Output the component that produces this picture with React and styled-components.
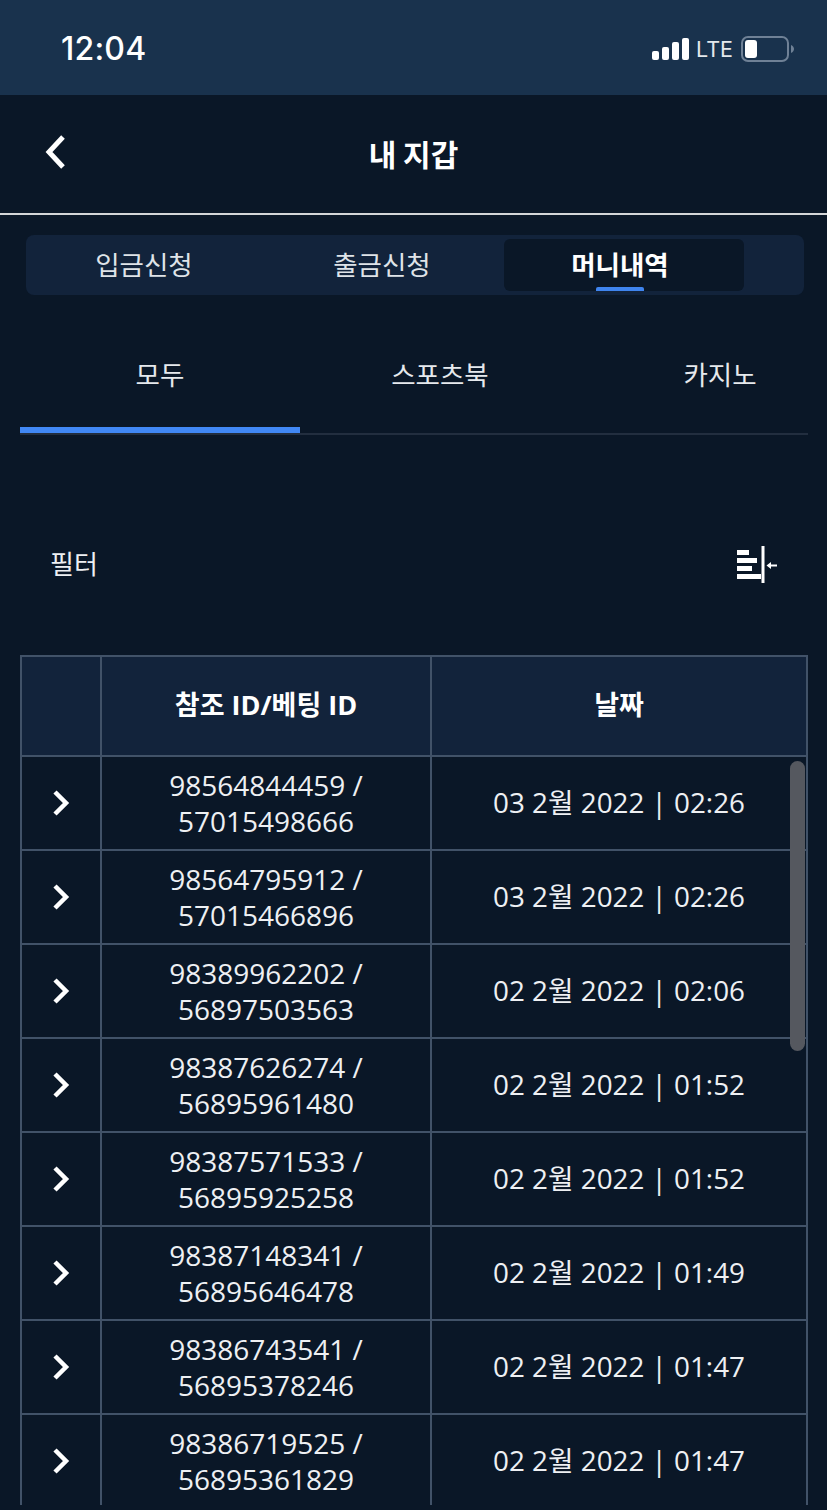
import React from "react";
import styled, { createGlobalStyle } from "styled-components";

const GlobalStyle = createGlobalStyle`
  html, body {
    margin: 0;
    padding: 0;
    background: #0a1727;
  }
`;

const Page = styled.div`
  width: 827px;
  height: 1510px;
  overflow: hidden;
  background: #0a1727;
  color: #fff;
  font-family: "Open Sans", "Noto Sans CJK KR", sans-serif;
`;

const StatusBar = styled.div`
  height: 95px;
  box-sizing: border-box;
  padding: 2px 33px 0 61px;
  display: flex;
  align-items: center;
  justify-content: space-between;
  background: #19324d;
`;

const Clock = styled.span`
  font-family: Inter, sans-serif;
  font-size: 32px;
  font-weight: 500;
  letter-spacing: 0.2px;
`;

const StatusIcons = styled.div`
  display: flex;
  align-items: center;
  gap: 7px;
`;

const Lte = styled.span`
  margin-right: 1px;
  font-family: Inter, sans-serif;
  font-size: 21.500px;
  color: #e4e8ec;
`;

const NavBar = styled.div`
  height: 120px;
  box-sizing: border-box;
  position: relative;
  display: flex;
  align-items: center;
  justify-content: center;
  border-bottom: 2px solid #d4d6d8;
`;

const BackButton = styled.div`
  position: absolute;
  left: 44px;
  top: 40px;
  line-height: 0;
`;

const Title = styled.h1`
  margin: 0 0 2px;
  font-family: "Noto Sans CJK KR", sans-serif;
  font-size: 30px;
  font-weight: 700;
`;

const MainTabs = styled.div`
  margin: 20px 23px 0 26px;
  height: 60px;
  box-sizing: border-box;
  padding: 4px 2px;
  display: flex;
  border-radius: 8px;
  background: #12233b;
`;

const MainTab = styled.div`
  position: relative;
  flex: 0 0 240px;
  margin-right: -2px;
  box-sizing: border-box;
  padding-right: 8px;
  padding-bottom: 3px;
  display: flex;
  align-items: center;
  justify-content: center;
  border-radius: 6px;
  font-family: "Noto Sans CJK KR", sans-serif;
  font-size: 26.500px;
  font-weight: ${(p) => (p.$active ? 700 : 400)};
  color: ${(p) => (p.$active ? "#fff" : "#dfe3e8")};
  background: ${(p) => (p.$active ? "#0a1727" : "transparent")};
`;

const MainTabMark = styled.span`
  position: absolute;
  left: 92px;
  bottom: 0;
  width: 48px;
  height: 4px;
  border-radius: 2px 2px 0 0;
  background: #3f84ee;
`;

const SubTabs = styled.div`
  margin: 32px 19px 0 20px;
  height: 108px;
  display: flex;
  overflow: hidden;
  box-sizing: border-box;
  border-bottom: 2px solid #222e3f;
`;

const SubTab = styled.div`
  position: relative;
  flex: 0 0 280px;
  box-sizing: border-box;
  padding-bottom: 14px;
  display: flex;
  align-items: center;
  justify-content: center;
  font-family: "Noto Sans CJK KR", sans-serif;
  font-size: 26.500px;
  color: #e6e9ed;
  box-shadow: ${(p) => (p.$active ? "inset 0 -6px 0 #4188f5" : "none")};
`;

const FilterRow = styled.div`
  margin-top: 88px;
  height: 82px;
  box-sizing: border-box;
  padding: 0 50px;
  display: flex;
  align-items: center;
  justify-content: space-between;
`;

const FilterLabel = styled.span`
  margin-bottom: 4px;
  font-family: "Noto Sans CJK KR", sans-serif;
  font-size: 26px;
  color: #eef0f3;
`;

const TableWrap = styled.div`
  position: relative;
  margin: 50px 19px 0 20px;
  height: 850px;
  overflow: hidden;
`;

const Table = styled.table`
  width: 788px;
  table-layout: fixed;
  border-collapse: separate;
  border-spacing: 0;
  border-top: 2px solid #415268;
  border-left: 2px solid #415268;
  border-right: 2px solid #415268;
`;

const HeadCell = styled.th`
  height: 92px;
  padding: 0 0 6px;
  background: #12233b;
  font-size: 27px;
  font-weight: 700;
  color: #fff;
  border-right: ${(p) => (p.$last ? "0" : "2px solid #415268")};
  border-bottom: 2px solid #415268;
`;

const Cell = styled.td`
  height: 92px;
  padding: 0;
  text-align: center;
  font-size: 28px;
  line-height: 36px;
  color: #eef0f3;
  border-right: 2px solid #415268;
  border-bottom: 2px solid #415268;
`;

const DateCell = styled(Cell)`
  height: 90px;
  padding-bottom: 2px;
  font-size: 27.800px;
  border-right: 0;
`;

const RefText = styled.div`
  width: 230px;
  margin: 0 auto;
`;

const ChevronWrap = styled.div`
  display: flex;
  justify-content: center;
`;

const ScrollThumb = styled.div`
  position: absolute;
  right: 3px;
  top: 106px;
  width: 15px;
  height: 290px;
  border-radius: 8px;
  background: #55585f;
`;

const Signal = () => (
  <svg width="37" height="22" viewBox="0 0 37 22" fill="#fff">
    <rect x="0" y="13" width="7" height="9" rx="2" />
    <rect x="10" y="9" width="7" height="13" rx="2" />
    <rect x="20" y="4" width="7" height="18" rx="2" />
    <rect x="30" y="0" width="7" height="22" rx="2" />
  </svg>
);

const Battery = () => (
  <svg width="53" height="26" viewBox="0 0 53 26">
    <rect x="1" y="1" width="46" height="24" rx="6" fill="none" stroke="#6f8196" strokeWidth="2" />
    <rect x="4" y="4" width="12" height="18" rx="3" fill="#fff" />
    <path d="M50 9c2 1 3 2.500 3 4s-1 3-3 4z" fill="#6f8196" />
  </svg>
);

const BackIcon = () => (
  <svg width="24" height="34" viewBox="0 0 24 34" fill="none" stroke="#fff" strokeWidth="5">
    <path d="M19 2 5 17l14 15" />
  </svg>
);

const ChevronIcon = () => (
  <svg width="20" height="28" viewBox="0 0 20 28" fill="none" stroke="#fff" strokeWidth="4.500">
    <path d="M4 3l11 11L4 25" />
  </svg>
);

const FilterIcon = () => (
  <svg width="40" height="37" viewBox="0 0 40 37" fill="#fff">
    <rect x="0" y="4" width="12" height="5" />
    <rect x="0" y="12" width="20" height="5" />
    <rect x="0" y="20" width="15" height="5" />
    <rect x="0" y="28" width="24" height="5" />
    <rect x="24.500" y="0" width="3" height="37" />
    <path d="M29.500 19.500l4.500-3.500v2.500h6v2h-6v2.500z" />
  </svg>
);

const rows = [
  ["98564844459", "57015498666", "03 2월 2022 | 02:26"],
  ["98564795912", "57015466896", "03 2월 2022 | 02:26"],
  ["98389962202", "56897503563", "02 2월 2022 | 02:06"],
  ["98387626274", "56895961480", "02 2월 2022 | 01:52"],
  ["98387571533", "56895925258", "02 2월 2022 | 01:52"],
  ["98387148341", "56895646478", "02 2월 2022 | 01:49"],
  ["98386743541", "56895378246", "02 2월 2022 | 01:47"],
  ["98386719525", "56895361829", "02 2월 2022 | 01:47"]
];

const App = () => (
  <Page>
    <GlobalStyle />
    <StatusBar>
      <Clock>12:04</Clock>
      <StatusIcons>
        <Signal />
        <Lte>LTE</Lte>
        <Battery />
      </StatusIcons>
    </StatusBar>
    <NavBar>
      <BackButton>
        <BackIcon />
      </BackButton>
      <Title>내 지갑</Title>
    </NavBar>
    <MainTabs>
      <MainTab>입금신청</MainTab>
      <MainTab>출금신청</MainTab>
      <MainTab $active>
        머니내역
        <MainTabMark />
      </MainTab>
    </MainTabs>
    <SubTabs>
      <SubTab $active>모두</SubTab>
      <SubTab>스포츠북</SubTab>
      <SubTab>카지노</SubTab>
    </SubTabs>
    <FilterRow>
      <FilterLabel>필터</FilterLabel>
      <FilterIcon />
    </FilterRow>
    <TableWrap>
      <Table>
        <colgroup>
          <col style={{ width: 80 }} />
          <col style={{ width: 330 }} />
          <col />
        </colgroup>
        <thead>
          <tr>
            <HeadCell />
            <HeadCell>참조 ID/베팅 ID</HeadCell>
            <HeadCell $last>날짜</HeadCell>
          </tr>
        </thead>
        <tbody>
          {rows.map((row) => (
            <tr key={row[0]}>
              <Cell>
                <ChevronWrap>
                  <ChevronIcon />
                </ChevronWrap>
              </Cell>
              <Cell>
                <RefText>
                  {row[0]} / {row[1]}
                </RefText>
              </Cell>
              <DateCell>{row[2]}</DateCell>
            </tr>
          ))}
        </tbody>
      </Table>
      <ScrollThumb />
    </TableWrap>
  </Page>
);

export default App;
